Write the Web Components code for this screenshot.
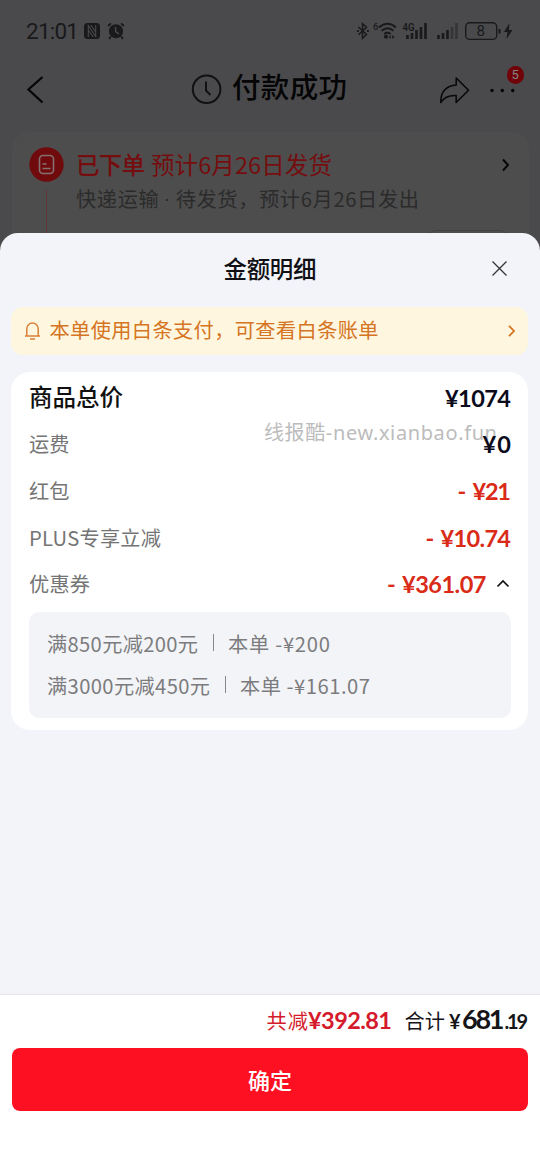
<!DOCTYPE html>
<html lang="zh-CN">
<head>
<meta charset="utf-8">
<title>付款成功</title>
<style>
html,body{margin:0;padding:0;background:#4a4a4c}
body{width:540px;height:1165px;overflow:hidden;font-family:"Noto Sans CJK SC","Noto Sans",sans-serif}
</style>
</head>
<body>
<pay-page></pay-page>
<script>
const define = (name, html, setup) => {
  const t = document.createElement('template');
  t.innerHTML = html;
  customElements.define(name, class extends HTMLElement {
    constructor() {
      super();
      this.attachShadow({mode: 'open'}).append(document.importNode(t.content, true));
    }
    connectedCallback() { if (setup) setup(this, this.shadowRoot); }
  });
};

// Single line of text whose tracking is adjusted to a given width (attribute w).
define('fit-text', `<style>
:host{display:block;white-space:nowrap;line-height:1;flex:none}
span{display:inline-block}
</style><span><slot></slot></span>`, (el, root) => {
  const span = root.querySelector('span');
  const w = parseFloat(el.getAttribute('w'));
  el.style.width = w + 'px';
  const n = [...el.textContent].length;
  const now = span.getBoundingClientRect().width;
  if (now > 0 && n > 1) span.style.letterSpacing = ((w - now) / (n - 1)) + 'px';
});

define('status-bar', `<style>
:host{display:flex;align-items:center;height:62px;padding:0 26px 0 26px;color:#19191b;box-sizing:border-box}
.time{font:400 22.500px/1 Roboto,sans-serif;padding-top:1px}
svg{display:block;flex:none}
.grow{flex:1}
text{font-family:Roboto,sans-serif;fill:#19191b}
</style>
<fit-text class="time" w="53">21:01</fit-text>
<svg style="margin-left:5px" width="16" height="16" viewBox="0 0 16 16"><rect width="16" height="16" rx="3.500" fill="#19191b"/><path d="M4.300 14V2.500L11.700 13.500V2M6.800 2l4.900 7M4.300 7l4.900 7" stroke="#4a4a4c" stroke-width="1.100" fill="none"/></svg>
<svg style="margin-left:7px" width="18" height="18" viewBox="0 0 18 18"><circle cx="9" cy="9.300" r="7" fill="#19191b"/><path d="M1 4 4 1.300M17 4l-3-2.700M3.800 14.500 2 17M14.200 14.500 16 17" stroke="#19191b" stroke-width="1.800"/><path d="M8.600 5v4.600l3.400 2.200" fill="none" stroke="#4a4a4c" stroke-width="1.400"/></svg>
<div class="grow"></div>
<svg width="158" height="22" viewBox="356 20 158 22" fill="none" stroke="#19191b">
<path d="M358.500 27 366.500 34.500l-4 3.800V23.700l4 3.600-8 7.500" stroke-width="1.500"/><path d="M357 31h1.800M367 31h1.800" stroke-width="1.800"/>
<text x="373" y="29.500" font-size="9.500" font-weight="500" stroke="none">6</text>
<path d="M379 27.500q8.500-7.500 17 0M381.500 30.800q6-5 12 0M384.200 34q3.200-2.500 6.400 0" stroke-width="2"/><circle cx="386" cy="36.800" r="2" fill="#19191b" stroke="none"/><path d="M390.700 35v4l-2-2zM392.300 35v4l2.300-2z" fill="#19191b" stroke="none"/>
<text x="402.500" y="30.500" font-size="10.500" font-weight="600" textLength="12" lengthAdjust="spacingAndGlyphs" stroke="none">4G</text>
<path d="M407.500 35v4M412 33v6M416.500 30v9M421 27v12M425.500 23v16" stroke-width="2.600"/>
<path d="M438.500 35v4M443 33v6M447.500 30v9" stroke-width="2.600"/><path d="M452 27v12M456.500 23v16" stroke="#353536" stroke-width="2.600"/>
<rect x="465.700" y="22.700" width="31" height="16.700" rx="4" stroke-width="1.400"/><path d="M499.500 29v4.500" stroke-width="2"/>
<text x="480.700" y="36.300" font-size="15" text-anchor="middle" stroke="none">8</text>
<path d="M509.500 23 504 32h3.500l-1 7 6-9h-3.700z" fill="#19191b" stroke="none"/>
</svg>`);

define('nav-bar', `<style>
:host{display:flex;align-items:center;height:56px;padding:0 22px 0 26px;box-sizing:border-box;position:relative;color:#050506}
svg{display:block;flex:none}
.title{font-size:28.500px;font-weight:500;margin:0 0 7px 9px}
.badge{position:absolute;left:506.500px;top:4px;width:17.500px;height:17.500px;border-radius:50%;background:#700308;color:#858586;font:13px/18px Roboto,sans-serif;text-align:center}
</style>
<svg width="18" height="30" viewBox="26 75 18 30"><path d="M42.500 77 28.500 89.500 42.500 102.500" fill="none" stroke="#050506" stroke-width="2.300"/></svg>
<svg style="margin:0 0 3px 147px" width="32" height="32" viewBox="191 72 32 32"><circle cx="206.600" cy="88.300" r="13.800" fill="none" stroke="#111113" stroke-width="2"/><path d="M206 80.500v9l4.500 4.500" fill="none" stroke="#111113" stroke-width="2"/></svg>
<fit-text class="title" w="115">付款成功</fit-text>
<svg style="margin:0 0 1px auto" width="78" height="30" viewBox="440 74 78 30"><path d="M440.800 101.500C440.500 90 446 85 456.200 84V77L468.500 89.300 456.200 101.500V94.500C449 94 444 96.500 440.800 101.500Z" fill="none" stroke="#09090a" stroke-width="1.600" stroke-linejoin="round"/><circle cx="492" cy="89.500" r="1.700"/><circle cx="502.300" cy="89.500" r="1.700"/><circle cx="512.700" cy="89.500" r="1.700"/></svg>
<div class="badge">5</div>`);

define('order-card', `<style>
:host{display:flex;box-sizing:border-box;width:517px;height:140px;margin:14px 0 0 11.500px;background:#4d4d4d;border-radius:18px;padding:15px 18px 0 17px;position:relative}
.rail{width:35px;display:flex;flex-direction:column;align-items:center;gap:8px;flex:none}
.line{width:1px;flex:1;background:#653638}
.body{margin-left:12.500px;padding-top:6px}
.head{display:flex;gap:6px;font-size:23.500px;color:#750d0f}
.sub{font-size:20.200px;color:#2b2b2b;margin-top:12.500px}
.dot{font-family:Roboto,sans-serif}
.arrow{margin:11px 0 0 auto}
.peek{position:absolute;left:414px;top:98px;width:84px;height:30px;border:1px solid #424242;border-radius:10px;box-sizing:border-box}
</style>
<div class="rail"><svg width="35" height="35" viewBox="0 0 35 35"><circle cx="17.500" cy="17.500" r="17.200" fill="#700b0d"/><rect x="10.500" y="8.500" width="14" height="18" rx="3.500" fill="none" stroke="#857070" stroke-width="1.600"/><path d="M13.500 17h4M13.500 21.500h8" stroke="#857070" stroke-width="1.500"/></svg><div class="line"></div></div>
<div class="body">
<div class="head"><fit-text w="69" style="font-weight:500">已下单</fit-text><fit-text w="181">预计6月26日发货</fit-text></div>
<fit-text class="sub" w="343">快递运输 <span class="dot">·</span> 待发货，预计6月26日发出</fit-text>
</div>
<svg class="arrow" width="10" height="14" viewBox="0 0 10 14"><path d="M2 1.500 7 7 2 12.500" fill="none" stroke="#050505" stroke-width="2"/></svg>
<div class="peek"></div>`);

define('notice-bar', `<style>
:host{display:flex;align-items:center;height:48px;margin:0 12px 0 11px;padding:0 11.500px 0 12.500px;border-radius:12px;background:#fef6de;color:#d57422;box-sizing:border-box}
.msg{font-size:20.200px;margin:0 0 2px 9px}
svg{display:block;flex:none}
</style>
<svg width="17" height="20" viewBox="0 0 17 20" fill="none" stroke="#d98037" stroke-width="1.500"><path d="M1 15h15M2.800 15V7.800a5.700 5.700 0 0 1 11.400 0v7.200M6 18h5"/></svg>
<fit-text class="msg" w="329"><slot></slot></fit-text>
<svg style="margin:0 0 1px auto" width="12" height="14" viewBox="0 0 12 14"><path d="M4 1.800 9 7 4 12.200" fill="none" stroke="#d57422" stroke-width="1.800"/></svg>`, null);

define('amount-row', `<style>
:host{display:flex;align-items:center;justify-content:space-between;height:46.700px;color:#747474;font-size:20.200px}
:host([total]){color:#111;font-size:23.500px;font-weight:500}
:host(:not([total])) ::slotted([slot=label]){margin-top:1.500px}
.v{display:flex;align-items:center;position:relative;z-index:2}
</style><slot name="label"></slot><div class="v"><slot></slot></div>`);

define('coupon-list', `<style>
:host{display:flex;flex-direction:column;justify-content:center;gap:21.800px;height:106px;margin-top:5.200px;padding-left:18px;background:#f3f4f8;border-radius:10px;box-sizing:border-box;color:#7c7c7e;font-size:20.200px}
.r{display:flex;align-items:center}
i{width:1.500px;height:17px;background:#88888a;margin:0 14px 3px 14.500px}
</style>
<div class="r"><fit-text w="151">满850元减200元</fit-text><i></i><fit-text w="102">本单 -¥200</fit-text></div>
<div class="r"><fit-text w="163">满3000元减450元</fit-text><i></i><fit-text w="130">本单 -¥161.07</fit-text></div>`);

define('price-card', `<style>
:host{display:block;box-sizing:border-box;height:358px;margin:17px 12px 0 11px;padding:1.500px 17px 0 18px;background:#fff;border-radius:19px;position:relative}
.n{font-family:Lato,sans-serif;font-weight:700;font-size:23.500px;color:#0b0b1c;margin-top:3px}
.red{color:#d92b18}
.g{margin-right:5px}
.wm{position:absolute;left:253px;top:50.500px;font-family:"Noto Sans","Noto Sans CJK SC",sans-serif;font-size:20px;color:#bcbcbc}
svg{display:block;margin:0 1.500px 0 9px}
</style>
<amount-row total><fit-text slot="label" w="94">商品总价</fit-text><fit-text class="n" w="66">¥1074</fit-text></amount-row>
<amount-row><fit-text slot="label" w="40.500">运费</fit-text><fit-text class="n" w="28.500">¥0</fit-text></amount-row>
<amount-row><fit-text slot="label" w="40.500">红包</fit-text><fit-text class="n red g" w="10">-</fit-text><fit-text class="n red" w="38.500">¥21</fit-text></amount-row>
<amount-row><fit-text slot="label" w="132">PLUS专享立减</fit-text><fit-text class="n red g" w="10">-</fit-text><fit-text class="n red" w="70.500">¥10.74</fit-text></amount-row>
<amount-row><fit-text slot="label" w="61">优惠券</fit-text><fit-text class="n red g" w="10">-</fit-text><fit-text class="n red" w="84.500">¥361.07</fit-text><svg width="14" height="9" viewBox="0 0 14 9"><path d="M1.500 7.500 7 2l5.500 5.500" fill="none" stroke="#111" stroke-width="1.700"/></svg></amount-row>
<coupon-list></coupon-list>
<fit-text class="wm" w="233">线报酷-new.xianbao.fun</fit-text>`);

define('checkout-bar', `<style>
:host{display:block;box-sizing:border-box;height:171px;margin-top:auto;background:#fff;border-top:1.500px solid #e4e5e9;padding:0 12px}
.sum{display:flex;justify-content:flex-end;align-items:baseline;height:53px;line-height:1;padding-top:10px;box-sizing:border-box;font-size:20.200px;color:#151518}
.n{font-family:Lato,sans-serif;font-weight:700}
.red{color:#d41a2b}
.btn{height:63px;border-radius:8px;background:#fe1023;display:flex;align-items:center;justify-content:center;color:#fff;font-size:22px;font-weight:500;padding-bottom:2px;box-sizing:border-box}
</style>
<div class="sum"><fit-text class="red" w="41.500">共减</fit-text><fit-text class="n red" w="84" style="font-size:23.500px">¥392.81</fit-text>
<fit-text w="40.500" style="margin-left:12.500px">合计</fit-text><fit-text class="n" w="12" style="font-size:20px;margin-left:4px">¥</fit-text><fit-text class="n" w="42.500" style="font-size:27px;margin-left:1px">681</fit-text><fit-text class="n" w="23.500" style="font-size:20px">.19</fit-text></div>
<div class="btn"><fit-text w="44">确定</fit-text></div>`);

define('amount-sheet', `<style>
:host{position:absolute;left:0;top:233px;width:540px;height:932px;display:flex;flex-direction:column;background:#f3f4f9;border-radius:18px 18px 0 0;overflow:hidden}
.head{height:74px;display:grid;grid-template-columns:1fr auto 1fr;align-items:center;font-size:23.500px;font-weight:500;color:#101014;flex:none;padding-bottom:4px;box-sizing:border-box}
.head fit-text{margin-top:2px}
svg{display:block;justify-self:end;margin-right:32px}
</style>
<div class="head"><span></span><fit-text w="93">金额明细</fit-text><svg width="17" height="17" viewBox="0 0 17 17"><path d="m1.500 1.500 14 14m0-14-14 14" stroke="#333" stroke-width="1.300"/></svg></div>
<notice-bar>本单使用白条支付，可查看白条账单</notice-bar>
<price-card></price-card>
<checkout-bar></checkout-bar>`);

define('pay-page', `<style>
:host{display:block;position:relative;width:540px;height:1165px;overflow:hidden;background:#4a4a4c}
</style><status-bar></status-bar><nav-bar></nav-bar><order-card></order-card><amount-sheet></amount-sheet>`);

// The notice text is slotted through, so its length is read from the host.
const sheet = document.querySelector('pay-page').shadowRoot.querySelector('amount-sheet');
const notice = sheet.shadowRoot.querySelector('notice-bar');
const msg = notice.shadowRoot.querySelector('fit-text').shadowRoot.querySelector('span');
msg.style.letterSpacing = '0';
msg.style.letterSpacing = ((329 - msg.getBoundingClientRect().width) / (notice.textContent.length - 1)) + 'px';
</script>
</body>
</html>
